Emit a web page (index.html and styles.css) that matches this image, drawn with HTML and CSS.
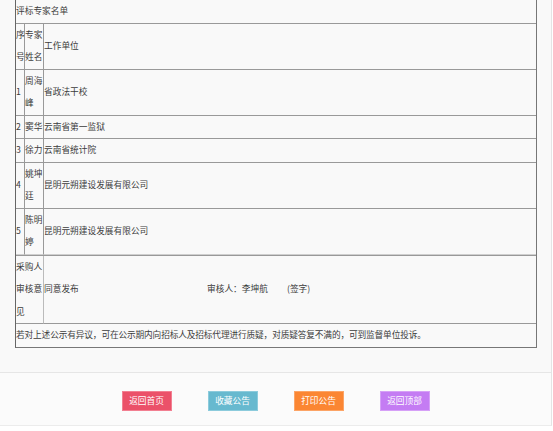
FILE: index.html
```html
<!DOCTYPE html>
<html lang="zh-CN">
<head>
<meta charset="utf-8">
<title>评标专家名单</title>
<link rel="stylesheet" href="styles.css">
</head>
<body>
<div class="page">
  <div class="notice">
    <div class="title-row">评标专家名单</div>
    <div class="experts">
      <div class="cell">序号</div><div class="cell">专家姓名</div><div class="cell last">工作单位</div>
      <div class="cell">1</div><div class="cell">周海峰</div><div class="cell last">省政法干校</div>
      <div class="cell">2</div><div class="cell">窦华</div><div class="cell last">云南省第一监狱</div>
      <div class="cell">3</div><div class="cell">徐力</div><div class="cell last">云南省统计院</div>
      <div class="cell">4</div><div class="cell">姚坤廷</div><div class="cell last">昆明元朔建设发展有限公司</div>
      <div class="cell end">5</div><div class="cell end">陈明婷</div><div class="cell last end">昆明元朔建设发展有限公司</div>
    </div>
    <div class="review">
      <div class="cell label">采购人审核意见</div>
      <div class="cell last opinion">
        <span class="agree">同意发布</span>
        <span class="reviewer">审核人：李坤航</span>
        <span class="sign">(签字)</span>
      </div>
    </div>
    <div class="note">若对上述公示有异议，可在公示期内向招标人及招标代理进行质疑，对质疑答复不满的，可到监督单位投诉。</div>
  </div>
  <div class="actions">
    <a class="btn btn-home">返回首页</a>
    <a class="btn btn-fav">收藏公告</a>
    <a class="btn btn-print">打印公告</a>
    <a class="btn btn-top">返回顶部</a>
  </div>
</div>
</body>
</html>
```
FILE: styles.css
```css
html, body {
  margin: 0;
  padding: 0;
  background: #ffffff;
}
body {
  font-family: "Noto Sans CJK SC", "Noto Sans", sans-serif;
  font-size: 8.7px;
  color: #3c3c3c;
}
.page {
  width: 551px;
  background: #f9f9f9;
  border-right: 1px solid #e4e4e4;
  border-bottom: 1px solid #ececec;
}
.notice {
  margin-left: 15px;
  width: 520px;
  border-left: 1px solid #666;
  border-right: 1px solid #777;
  border-bottom: 1px solid #777;
}
.title-row {
  line-height: 22.5px;
  border-bottom: 1px solid #999;
  white-space: nowrap;
}
.experts {
  display: grid;
  grid-template-columns: 9px 19px 1fr;
}
.cell {
  display: flex;
  align-items: center;
  line-height: 22.5px;
  border-right: 1px solid #999;
  border-bottom: 1px solid #999;
  overflow: visible;
  word-break: break-all;
}
.cell.last {
  border-right: 0;
  white-space: nowrap;
}
.cell.end {
  border-bottom-color: #cfcfcf;
}
.review {
  display: grid;
  grid-template-columns: 28px 1fr;
  border-top: 1px solid #999;
}
.cell.label {
  border-right-color: #bbb;
}
.opinion {
  white-space: pre;
}
.agree {
  width: 163px;
}
.reviewer {
  width: 80px;
}
.note {
  line-height: 22.5px;
  letter-spacing: -0.15px;
  white-space: nowrap;
}
.actions {
  margin-top: 24px;
  border-top: 1px solid #e6e6e6;
  background: #fbfbfb;
  padding: 18px 0 14px;
  display: flex;
  justify-content: center;
  gap: 36px;
}
.btn {
  box-sizing: border-box;
  width: 50px;
  height: 20px;
  line-height: 18px;
  text-align: center;
  color: #fff;
  border: 1px solid transparent;
  white-space: nowrap;
}
.btn-home { background: #eb5169; border-color: #f27f91; }
.btn-fav { background: #67b9cf; border-color: #8ccbdc; }
.btn-print { background: #fb8633; border-color: #fca466; }
.btn-top { background: #c47cf3; border-color: #d6a0f7; }
```
